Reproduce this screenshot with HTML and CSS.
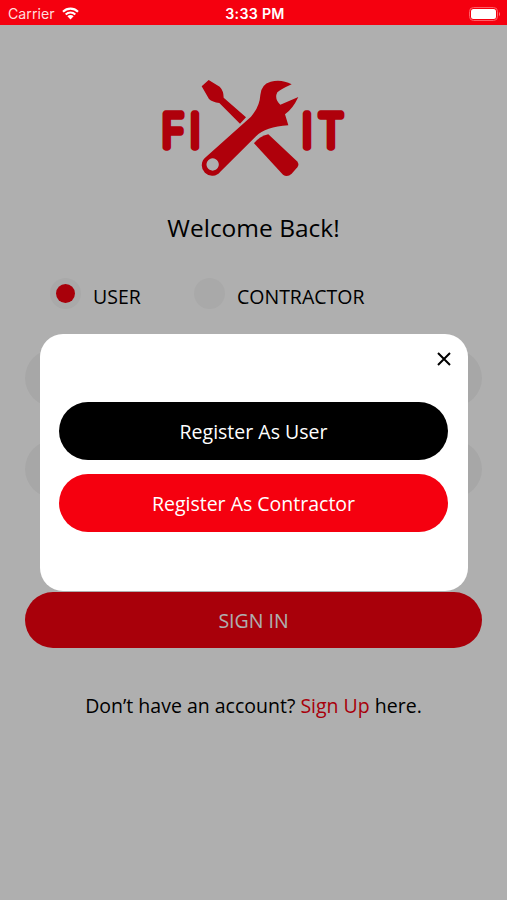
FILE: index.html
```html
<!DOCTYPE html>
<html lang="en">
<head>
  <meta charset="UTF-8" />
  <meta name="viewport" content="width=device-width, initial-scale=1.0" />
  <title>Fixit - Sign In</title>
  <link rel="stylesheet" href="styles.css">
</head>
<body>
  <header class="status-bar">
    <div class="carrier">
      <span>Carrier</span>
      <svg class="wifi" viewBox="0 0 17 13" width="17" height="13">
        <path d="M1 4.7a10.7 10.7 0 0 1 15 0M3.7 7.4a7 7 0 0 1 9.6 0" fill="none" stroke="#fff" stroke-width="2.1"/>
        <path d="M8.5 12.4 5.4 9.3a4.4 4.4 0 0 1 6.2 0z" fill="#fff"/>
      </svg>
    </div>
    <div class="time">3:33 PM</div>
    <div class="status-right">
      <svg viewBox="0 0 33 14" width="33" height="14">
        <rect x="0.5" y="0.5" width="28" height="13" rx="4" fill="none" stroke="#ff5f67"/>
        <rect x="2" y="2" width="25" height="10" rx="2.5" fill="#fff"/>
        <path d="M30 4.7q2 2.3 0 4.600z" fill="#ff777e"/>
      </svg>
    </div>
  </header>

  <main class="screen">
    <svg class="logo" viewBox="0 0 630 345" width="210" height="115">
      <g class="logo-text" transform="scale(0.88 1)">
        <text x="40" y="231">F</text>
        <text x="136" y="231">I</text>
        <text x="518" y="231">I</text>
        <text x="581" y="231">T</text>
      </g>
      <!-- screwdriver -->
      <path d="M155 49 176 30 209 50Q221 62 221 83L288 142 270 161 208 99Q187 96 177 87Z"/>
      <path d="M312 220Q328 199 355 193L441 274Q449 283 442 292L425 311Q412 323 399 314Z"/>
      <!-- wrench -->
      <path fill-rule="evenodd" d="M425 43Q394 26 362 35Q333 43 331 75Q329 110 303 140L167 262A31 31 0 1 0 211 305L318 199Q346 170 415 166L405 133Q428 117 445 81L391 104Q372 87 382 67Q394 57 425 43ZM188 265A18.500 18.500 0 1 1 187.900 265Z"/>
    </svg>

    <h1>Welcome Back!</h1>

    <form class="login">
      <div class="roles">
        <div class="role role-user"><span class="radio checked"></span><span>USER</span></div>
        <div class="role"><span class="radio"></span><span>CONTRACTOR</span></div>
      </div>
      <div class="field"></div>
      <div class="field"></div>
      <button type="button" class="sign-in">SIGN IN</button>
    </form>

    <p class="signup">Don’t have an account? <a>Sign Up</a> here.</p>
  </main>

  <div class="overlay">
    <div class="modal">
      <svg class="close" viewBox="0 0 14 14" width="14" height="14">
        <path d="M1 1 13 13M13 1 1 13"/>
      </svg>
      <button type="button" class="btn btn-user">Register As User</button>
      <button type="button" class="btn btn-contractor">Register As Contractor</button>
    </div>
  </div>
</body>
</html>
```
FILE: styles.css
```css
* {
  box-sizing: border-box;
}
body {
  margin: 0;
  height: 900px;
  position: relative;
  overflow: hidden;
  background: #fff;
  color: #000;
  font-family: "Open Sans", "Noto Sans", sans-serif;
}
.status-bar {
  display: grid;
  grid-template-columns: 1fr auto 1fr;
  align-items: center;
  height: 25px;
  padding: 2px 5px 0 8px;
  background: #f5000f;
  color: #fff;
  font-family: Inter, sans-serif;
}
.carrier {
  display: flex;
  align-items: center;
  gap: 7px;
  color: #ffdcdc;
  font-size: 14.2px;
}
.time {
  font-weight: 600;
  font-size: 14.2px;
  letter-spacing: 0.3px;
}
.status-right {
  display: flex;
  justify-content: flex-end;
}
.screen {
  display: flex;
  flex-direction: column;
  align-items: center;
  padding: 45px 25px 0;
}
.logo {
  margin-left: 3px;
  fill: #ff0010;
}
.logo-text {
  font-family: "Open Sans", sans-serif;
  font-size: 136px;
  font-weight: 300;
  stroke: #ff0010;
  stroke-width: 22px;
  stroke-linejoin: round;
}
h1 {
  margin: 26px 0 0;
  font-size: 24.5px;
  line-height: 33px;
  font-weight: 400;
}
.login {
  width: 457px;
  margin-top: 34px;
}
.roles {
  display: flex;
  height: 31px;
  padding-left: 25px;
  margin-bottom: 40px;
}
.role {
  display: flex;
  gap: 12px;
  font-size: 19.5px;
  line-height: 37px;
}
.role-user {
  width: 144px;
}
.radio {
  display: flex;
  align-items: center;
  justify-content: center;
  width: 31px;
  height: 31px;
  border-radius: 50%;
  background: #f7f7f7;
}
.radio.checked::after {
  content: "";
  width: 19px;
  height: 19px;
  border-radius: 50%;
  background: #f5000f;
}
.field {
  height: 58px;
  margin-bottom: 33px;
  border-radius: 29px;
  background: #f4f4f4;
}
button {
  display: block;
  border: none;
  padding: 0;
  color: #fff;
  font-family: inherit;
}
.sign-in {
  width: 100%;
  height: 56px;
  margin-top: 94px;
  border-radius: 28px;
  background: #f5000f;
  font-size: 19.5px;
}
.signup {
  margin: 44px 0 0;
  font-size: 19.5px;
  line-height: 28px;
}
.signup a {
  color: #f5000f;
}
/* dims everything below the status bar */
.overlay {
  position: absolute;
  top: 25px;
  left: 0;
  width: 100%;
  height: 875px;
  padding: 309px 39px 0 40px;
  background: rgba(0, 0, 0, 0.314);
}
.modal {
  display: flex;
  flex-direction: column;
  height: 257px;
  padding: 18px 20px 0 19px;
  border-radius: 23px;
  background: #fff;
}
.close {
  align-self: flex-end;
  margin: 0 -3px 36px 0;
  fill: none;
  stroke: #000;
  stroke-width: 2px;
}
.btn {
  height: 58px;
  border-radius: 29px;
  font-size: 19.5px;
}
.btn-user {
  margin-bottom: 14px;
  background: #000;
}
.btn-contractor {
  background: #f5000f;
}
```
